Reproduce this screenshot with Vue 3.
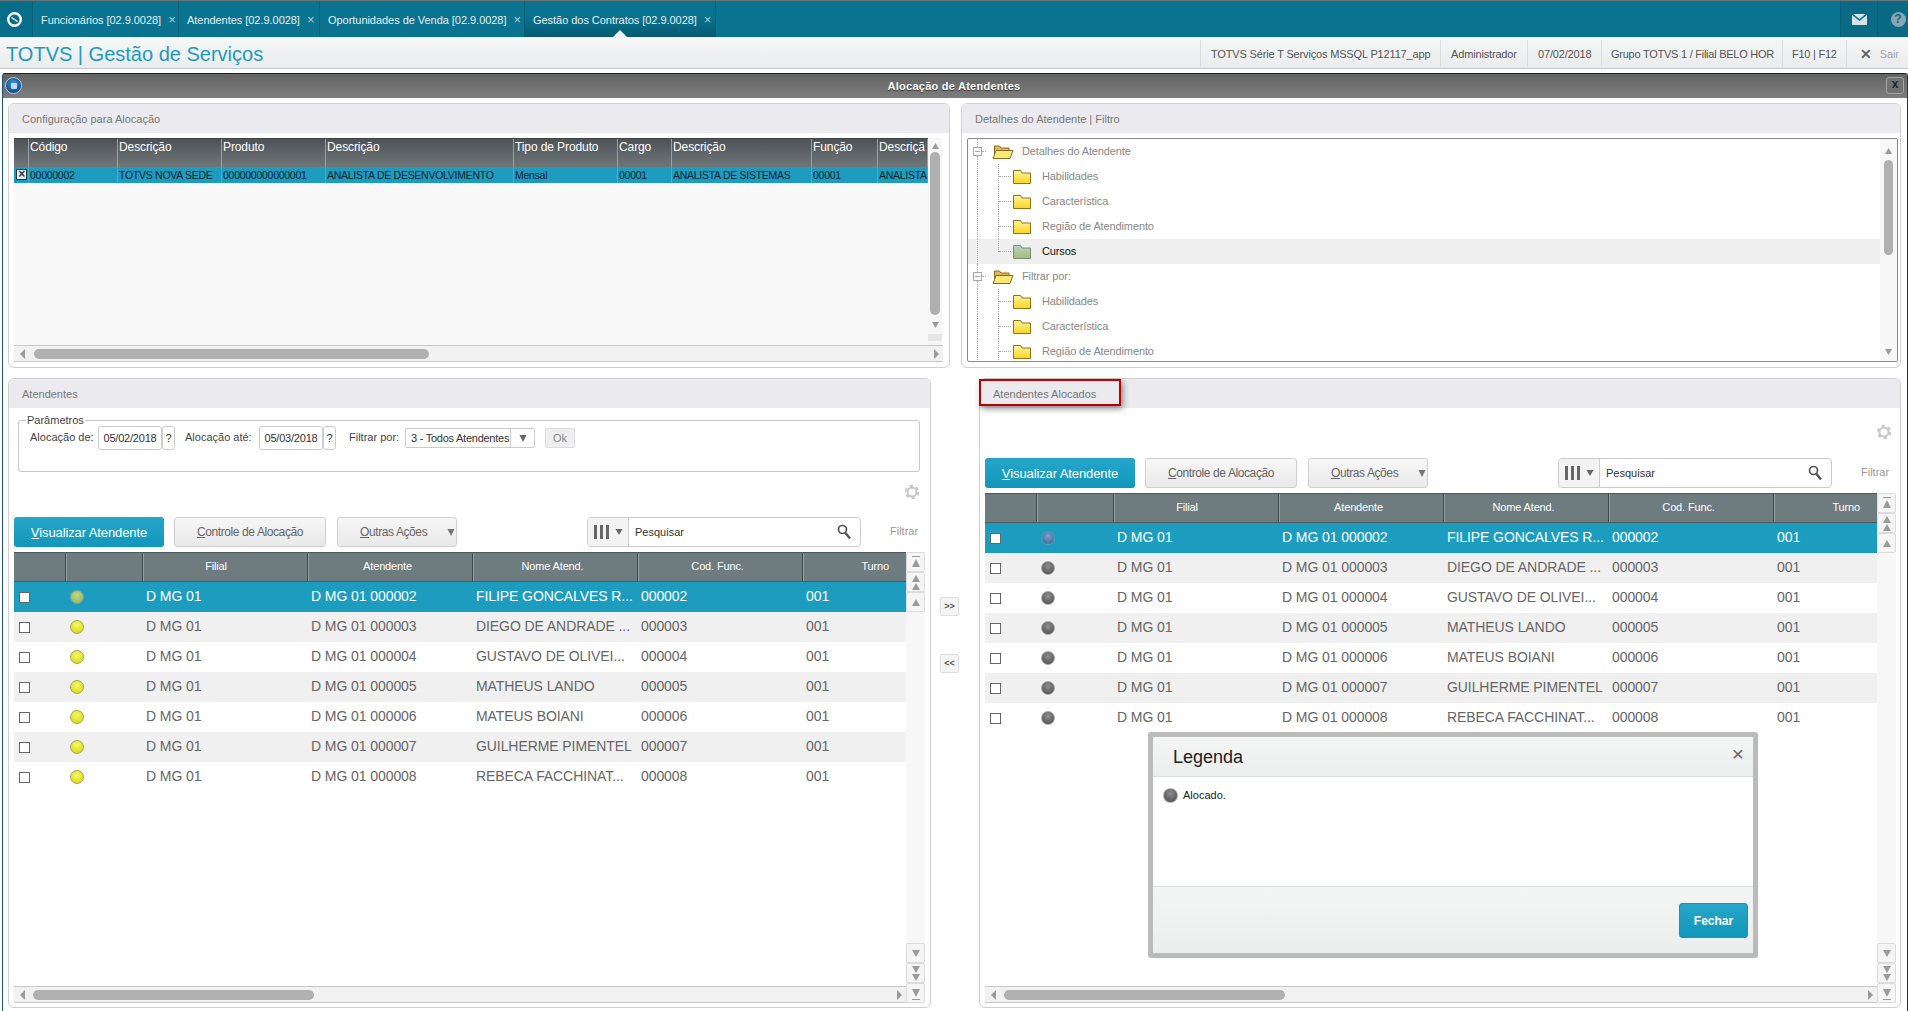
<script setup>
const tabs = [
  { name: 'Funcionários [02.9.0028]', w: 146 },
  { name: 'Atendentes [02.9.0028]', w: 141 },
  { name: 'Oportunidades de Venda [02.9.0028]', w: 205 },
  { name: 'Gestão dos Contratos [02.9.0028]', w: 191, active: true }
]
const infos = [
  { t: 'TOTVS Série T Serviços MSSQL P12117_app', w: 240 },
  { t: 'Administrador', w: 87 },
  { t: '07/02/2018', w: 74 },
  { t: 'Grupo TOTVS 1 / Filial BELO HOR', w: 181, tight: true },
  { t: 'F10 | F12', w: 64, tight: true }
]
const topCols = [
  { t: '', w: 15 }, { t: 'Código', v: '00000002', w: 89 }, { t: 'Descrição', v: 'TOTVS NOVA SEDE', w: 104 },
  { t: 'Produto', v: '000000000000001', w: 104 }, { t: 'Descrição', v: 'ANALISTA DE DESENVOLVIMENTO', w: 188 },
  { t: 'Tipo de Produto', v: 'Mensal', w: 104 }, { t: 'Cargo', v: '00001', w: 54 },
  { t: 'Descrição', v: 'ANALISTA DE SISTEMAS', w: 140 }, { t: 'Função', v: '00001', w: 66 },
  { t: 'Descriçã', v: 'ANALISTA', w: 50 }
]
const tree = [
  { t: 'Detalhes do Atendente', root: true },
  { t: 'Habilidades' }, { t: 'Característica' }, { t: 'Região de Atendimento' },
  { t: 'Cursos', sel: true, last: true },
  { t: 'Filtrar por:', root: true },
  { t: 'Habilidades' }, { t: 'Característica' }, { t: 'Região de Atendimento' }
]
const heads = ['Filial', 'Atendente', 'Nome Atend.', 'Cod. Func.', 'Turno']
const people = [
  ['000002', 'FILIPE GONCALVES R...'], ['000003', 'DIEGO DE ANDRADE ...'], ['000004', 'GUSTAVO DE OLIVEI...'],
  ['000005', 'MATHEUS LANDO'], ['000006', 'MATEUS BOIANI'], ['000007', 'GUILHERME PIMENTEL'], ['000008', 'REBECA FACCHINAT...']
]
const panels = [
  { title: 'Atendentes', led: 'yellow', params: true },
  { title: 'Atendentes Alocados', led: 'grey', params: false }
]
</script>

<template>
  <div class="page">
    <div class="topbar">
      <div class="logo-cell">
        <svg width="17" height="17" viewBox="0 0 17 17"><circle cx="8.5" cy="8.5" r="6.3" fill="none" stroke="#fff" stroke-width="2.4"/><path d="M5.5 6.5 11.500 10.500" stroke="#fff" stroke-width="1.400"/></svg>
      </div>
      <div v-for="tab in tabs" :key="tab.name" class="tab" :class="{ active: tab.active }" :style="{ width: tab.w + 'px' }">
        <span class="tab-name">{{ tab.name }}</span><span class="tab-x">×</span>
        <i v-if="tab.active" class="tab-arrow"></i>
      </div>
      <div class="top-spacer"></div>
      <div class="top-icon">
        <svg width="15" height="11" viewBox="0 0 15 11"><path d="M0 0h15v11H0z" fill="#d5e3ea"/><path d="M0 0 7.5 6 15 0" fill="none" stroke="#0a7390" stroke-width="1.6"/></svg>
      </div>
      <div class="top-icon help"><span>?</span></div>
    </div>

    <header class="appbar">
      <div class="app-title">TOTVS | Gestão de Serviços</div>
      <div class="info-list">
        <span v-for="i in infos" :key="i.t" class="info" :class="{ tight: i.tight }" :style="{ width: i.w + 'px' }">{{ i.t }}</span>
        <span class="info exit"><b>✕</b><em>Sair</em></span>
      </div>
    </header>

    <section class="window">
      <div class="titlebar">
        <span class="win-icon"><i></i></span>
        <span class="win-title">Alocação de Atendentes</span>
        <span class="win-close">x</span>
      </div>
      <div class="content">
        <div class="row-one">
          <div class="panel config">
            <div class="panel-head">Configuração para Alocação</div>
            <div class="config-body">
              <div class="config-main">
                <div class="old-table">
                  <div class="old-head">
                    <div v-for="(c, n) in topCols" :key="n" class="old-cell" :style="{ width: c.w + 'px' }">{{ c.t }}</div>
                  </div>
                  <div class="old-row">
                    <div v-for="(c, n) in topCols" :key="n" class="old-cell" :style="{ width: c.w + 'px' }">
                      <span v-if="n === 0" class="old-check">×</span>{{ c.v }}
                    </div>
                  </div>
                </div>
                <div class="slim-v">
                  <svg class="tri" width="9" height="8" viewBox="0 0 9 8"><path d="M4.5 1 8 7H1z"/></svg>
                  <div class="slim-thumb"></div>
                  <svg class="tri" width="9" height="8" viewBox="0 0 9 8"><path d="M4.5 7 8 1H1z"/></svg>
                  <div class="slim-end"></div>
                </div>
              </div>
              <div class="hscroll">
                <svg class="tri" width="7" height="12" viewBox="0 0 7 12"><path d="M1 6 6 1v10z"/></svg>
                <div class="h-track"><div class="h-thumb config-thumb"></div></div>
                <svg class="tri" width="7" height="12" viewBox="0 0 7 12"><path d="M6 6 1 1v10z"/></svg>
              </div>
            </div>
          </div>

          <div class="panel details">
            <div class="panel-head">Detalhes do Atendente | Filtro</div>
            <div class="tree-box">
              <div class="tree-list">
                <div v-for="(n, idx) in tree" :key="idx" class="tree-row" :class="{ sel: n.sel, root: n.root }">
                  <template v-if="n.root">
                    <span class="exp"><i class="dot-v"></i><i class="exp-box"></i><i class="dot-v"></i></span>
                    <i class="dot-h short"></i>
                    <svg width="22" height="17" viewBox="0 0 22 17" class="folder-open">
                      <path d="M2.5 15V3h5l1.500 2H17v3" fill="#e2b64e" stroke="#8a6a22"/>
                      <path d="M1 15.500 4 7.500H21L18 15.500Z" fill="#fde877" stroke="#8a6a22"/>
                    </svg>
                    <span class="tree-text">{{ n.t }}</span>
                  </template>
                  <template v-else>
                    <i class="guide one"></i>
                    <i class="guide two" :class="{ half: n.last }"></i>
                    <i class="dot-h"></i>
                    <svg width="20" height="16" viewBox="0 0 20 16" class="folder">
                      <defs>
                        <linearGradient id="fy" x1="0" y1="0" x2="0" y2="1"><stop offset="0" stop-color="#fff3a0"/><stop offset="1" stop-color="#fbd51f"/></linearGradient>
                        <linearGradient id="fg" x1="0" y1="0" x2="0" y2="1"><stop offset="0" stop-color="#b4d2c8"/><stop offset="1" stop-color="#a6bd78"/></linearGradient>
                      </defs>
                      <path d="M1.500 14.500V1.500h7l1.500 2.500h8.500v10.500Z" :fill="n.sel ? 'url(#fg)' : 'url(#fy)'" :stroke="n.sel ? '#7f8f6c' : '#94701c'"/>
                    </svg>
                    <span class="tree-text">{{ n.t }}</span>
                  </template>
                </div>
              </div>
              <div class="tree-scroll">
                <svg class="tri" width="9" height="8" viewBox="0 0 9 8"><path d="M4.5 1 8 7H1z"/></svg>
                <div class="tree-thumb"></div>
                <svg class="tri tree-down" width="9" height="8" viewBox="0 0 9 8"><path d="M4.5 7 8 1H1z"/></svg>
              </div>
            </div>
          </div>
        </div>

        <div class="row-two">
          <template v-for="(p, pi) in panels" :key="p.title">
            <div class="panel lower" :class="pi === 0 ? 'lower-left' : 'lower-right'">
              <div class="panel-head">
                {{ p.title }}
                <i v-if="!p.params" class="red-mark"></i>
              </div>
              <div class="lower-body">
                <fieldset v-if="p.params" class="params">
                  <legend>Parâmetros</legend>
                  <label>Alocação de:</label>
                  <span class="date">05/02/2018</span><span class="ask">?</span>
                  <label class="l2">Alocação até:</label>
                  <span class="date">05/03/2018</span><span class="ask">?</span>
                  <label class="l3">Filtrar por:</label>
                  <span class="select"><span class="select-text">3 - Todos Atendentes</span><span class="select-btn"><svg class="tri" width="8" height="9" viewBox="0 0 8 9"><path d="M4 8 .5 1h7z"/></svg></span></span>
                  <span class="ok">Ok</span>
                </fieldset>
                <div class="gear-row" :class="{ compact: !p.params }">
                  <svg width="14" height="18" viewBox="0 0 14 18"><circle cx="7" cy="9" r="4.500" fill="none" stroke="#c8c8c8" stroke-width="2"/><circle cx="7" cy="9" r="6" fill="none" stroke="#c8c8c8" stroke-width="2.400" stroke-dasharray="3.200 3.100"/></svg>
                </div>
                <div class="toolbar">
                  <button class="btn primary"><u>V</u>isualizar Atendente</button>
                  <button class="btn control"><u>C</u>ontrole de Alocação</button>
                  <button class="btn other"><span><u>O</u>utras Ações</span><svg class="tri" width="8" height="9" viewBox="0 0 8 9"><path d="M4 8 .5 1h7z"/></svg></button>
                  <div class="search">
                    <span class="cols"><i></i><i></i><i></i><svg class="tri" width="8" height="6" viewBox="0 0 8 6"><path d="M4 6 .5 0h7z"/></svg></span>
                    <span class="search-text">Pesquisar</span>
                    <svg width="14" height="16" viewBox="0 0 14 16"><circle cx="5.500" cy="5.500" r="4" fill="none" stroke="#555" stroke-width="1.700"/><path d="M8.500 9 13 14.500" stroke="#555" stroke-width="2.400"/></svg>
                  </div>
                  <span class="filter">Filtrar</span>
                </div>
                <div class="grid-wrap">
                  <div class="grid-main">
                    <div class="grid">
                      <div class="g-row g-head">
                        <div class="g-check"></div><div class="g-led"></div>
                        <div v-for="(h, hi) in heads" :key="h" class="g-col" :class="'h' + hi">{{ h }}</div>
                      </div>
                      <div v-for="(r, ri) in people" :key="r[0]" class="g-row g-data" :class="{ selected: ri === 0, alt: ri % 2 === 1 }">
                        <div class="g-check"><i></i></div>
                        <div class="g-led"><i :class="p.led"></i></div>
                        <div class="g-col">D MG 01</div>
                        <div class="g-col">D MG 01 {{ r[0] }}</div>
                        <div class="g-col">{{ r[1] }}</div>
                        <div class="g-col">{{ r[0] }}</div>
                        <div class="g-col">001</div>
                      </div>
                    </div>
                    <div class="hscroll lower-h">
                      <svg class="tri" width="7" height="12" viewBox="0 0 7 12"><path d="M1 6 6 1v10z"/></svg>
                      <div class="h-track"><div class="h-thumb lower-thumb"></div></div>
                      <svg class="tri" width="7" height="12" viewBox="0 0 7 12"><path d="M6 6 1 1v10z"/></svg>
                    </div>
                  </div>
                  <div class="v-buttons">
                    <div class="v-group">
                      <span class="v-btn"><svg class="tri" width="10" height="15" viewBox="0 0 10 15"><path d="M1 1h8v1H1zM5 4 9 12H1z"/></svg></span>
                      <span class="v-btn"><svg class="tri" width="10" height="15" viewBox="0 0 10 15"><path d="M5 0 9 7H1zM5 8 9 15H1z"/></svg></span>
                      <span class="v-btn"><svg class="tri" width="10" height="9" viewBox="0 0 10 9"><path d="M5 1 9 8H1z"/></svg></span>
                    </div>
                    <div class="v-group">
                      <span class="v-btn"><svg class="tri" width="10" height="9" viewBox="0 0 10 9"><path d="M5 8 9 1H1z"/></svg></span>
                      <span class="v-btn"><svg class="tri" width="10" height="15" viewBox="0 0 10 15"><path d="M5 7 9 0H1zM5 15 9 8H1z"/></svg></span>
                      <span class="v-btn"><svg class="tri" width="10" height="15" viewBox="0 0 10 15"><path d="M5 11 9 3H1zM1 13h8v1H1z"/></svg></span>
                    </div>
                  </div>
                </div>
              </div>
            </div>
            <div v-if="pi === 0" class="transfer">
              <span class="move first">&gt;&gt;</span>
              <span class="move">&lt;&lt;</span>
            </div>
          </template>
        </div>
      </div>
    </section>

    <div class="modal">
      <div class="modal-head"><span>Legenda</span><b>×</b></div>
      <div class="modal-body"><i class="led-big"></i><span>Alocado.</span></div>
      <div class="modal-foot"><button class="close-btn">Fechar</button></div>
    </div>
  </div>
</template>

<style>
html, body { margin: 0; background: #fff; }
</style>

<style scoped>
.page { position: relative; width: 1908px; height: 1011px; overflow: hidden; background: #fff; font-family: "Liberation Sans", Arial, sans-serif; color: #666; }
i, em { font-style: normal; }

.topbar { height: 36px; display: flex; background: #0a7390; border-top: 1px solid #6b7479; box-sizing: content-box; }
.logo-cell { width: 33px; box-sizing: border-box; padding-right: 4px; display: flex; align-items: center; justify-content: center; border-right: 1px solid #0a5f78; background: #086d88; }
.tab { position: relative; box-sizing: border-box; display: flex; align-items: center; padding: 1px 0 0 8px; border-right: 1px solid #0a5f78; color: #e4eff3; font-size: 11px; letter-spacing: -0.04px; white-space: nowrap; }
.tab.active { background: linear-gradient(#0a7390, #0a7390 40%, #055a72); }
.tab-x { margin-left: 7px; color: #a9cdd8; font-size: 13px; }
.tab-arrow { position: absolute; left: 50%; bottom: 0; margin-left: -7px; border: 7px solid transparent; border-top: 0; border-bottom-color: #eef1f2; }
.top-spacer { flex: 1; }
.top-icon { width: 36px; display: flex; align-items: center; justify-content: center; background: #0a6a85; border-left: 1px solid #0a5f78; }
.top-icon.help { width: 31px; box-sizing: border-box; padding-left: 10px; }
.top-icon.help span { width: 15px; height: 15px; border-radius: 50%; background: #8ba4b0; color: #0a6a85; font-size: 12px; font-weight: bold; line-height: 15px; text-align: center; }

.appbar { height: 32px; box-sizing: border-box; display: flex; justify-content: space-between; align-items: center; background: linear-gradient(#f6f8f8, #e9ebec); border-bottom: 1px solid #c6c8c9; padding-left: 6px; }
.app-title { font-size: 20px; color: #1d9ac0; white-space: nowrap; padding-top: 4px; }
.info-list { display: flex; align-self: stretch; padding: 3px 0 1px; }
.info { display: flex; align-items: center; box-sizing: border-box; padding: 1px 0 0 10px; border-left: 1px solid #dadcdd; font-size: 11px; letter-spacing: -0.16px; color: #555; white-space: nowrap; }
.info.tight { letter-spacing: -0.25px; padding-left: 9px; }
.exit { width: 62px; padding-left: 13px; gap: 8px; }
.exit b { font-size: 14px; color: #666; }
.exit em { color: #a3a3ab; }

.window { margin: 4px 0 0 2px; height: 937px; border-top: 1px solid #222; border-left: 1px solid #1d4f80; border-right: 1px solid #333; border-radius: 3px 3px 0 0; }
.titlebar { position: relative; height: 24px; display: flex; align-items: center; justify-content: center; background: linear-gradient(#636363, #7d7d7d); padding-right: 2px; }
.win-title { color: #fff; font-size: 11px; font-weight: bold; letter-spacing: 0.25px; text-shadow: 0 1px 1px #333; }
.win-icon { position: absolute; left: 2px; top: 3px; width: 17px; height: 17px; border-radius: 50%; background: radial-gradient(circle at 50% 40%, #48a0e0, #0d4d92 70%); border: 1px solid #c6ccd2; box-sizing: border-box; display: flex; align-items: center; justify-content: center; }
.win-icon i { width: 6px; height: 6px; background: #bcd9f0; border-radius: 1px; }
.win-close { position: absolute; right: 3px; top: 3px; width: 18px; height: 17px; box-sizing: border-box; border: 1px solid #a5a5a5; border-radius: 3px; background: #717171; color: #1c2530; font-size: 12px; font-weight: bold; text-align: center; line-height: 13px; }

.content { padding: 5px 0 0 5px; }
.row-one { display: flex; gap: 11px; height: 265px; }
.row-two { display: flex; height: 630px; margin-top: 10px; }
.panel { box-sizing: border-box; border: 1px solid #cfcfcf; border-radius: 6px; background: #fff; display: flex; flex-direction: column; }
.panel-head { position: relative; height: 29px; flex: none; display: flex; align-items: center; padding-left: 13px; background: #ebebef; border-radius: 6px 6px 0 0; font-size: 11px; color: #777; }
.config { width: 942px; }
.details { width: 940px; }
.config-body { padding: 5px 0 0 5px; }
.config-main { display: flex; height: 207px; }
.old-table { width: 914px; background: #f8f8f8; }
.old-head { height: 29px; display: flex; background: linear-gradient(#4d5356, #6f7678); border-top: 1px solid #3f4446; box-sizing: border-box; }
.old-head .old-cell { color: #fff; padding-top: 1px; font-size: 12px; letter-spacing: -0.1px; border-right: 1px solid #9aa0a2; }
.old-row { height: 16px; display: flex; background: #1d9cc0; }
.old-row .old-cell { color: #10232a; line-height: 16px; font-size: 10.5px; letter-spacing: -0.27px; border-right: 1px solid #4ea9c4; }
.old-cell { box-sizing: border-box; padding-left: 1px; white-space: nowrap; overflow: hidden; flex: none; }
.old-check { display: block; width: 11px; height: 11px; margin: 2px 0 0 1px; box-sizing: border-box; border: 1px solid #234; background: #e8eef0; line-height: 9px; text-align: center; font-size: 12px; font-weight: bold; color: #234; }
.slim-v { width: 14px; background: #f6f6f6; display: flex; flex-direction: column; align-items: center; padding-top: 4px; box-sizing: border-box; }
.slim-thumb { width: 10px; height: 163px; margin: 2px 0 6px; background: #b0b0b0; border-radius: 5px; }
.slim-end { margin-top: 5px; width: 14px; height: 7px; background: #e6e6e6; }
.tri { fill: #9a9a9a; flex: none; }
.hscroll { width: 929px; height: 17px; box-sizing: border-box; display: flex; align-items: center; padding: 0 3px 0 5px; gap: 5px; background: #f1f1f1; border-top: 1px solid #c8c8c8; border-bottom: 1px solid #c8c8c8; }
.h-track { flex: 1; }
.h-thumb { height: 10px; background: #b0b0b0; border-radius: 5px; }
.config-thumb { width: 395px; margin-left: 3px; }
.lower-h { width: 892px; }
.lower-thumb { width: 281px; margin-left: 2px; }

.tree-box { margin: 5px 0 0 5px; width: 931px; height: 224px; box-sizing: border-box; border: 1px solid #8a8a8a; border-radius: 2px; display: flex; overflow: hidden; }
.tree-list { flex: 1; }
.tree-row { height: 25px; display: flex; align-items: center; font-size: 11px; letter-spacing: -0.12px; color: #888; white-space: nowrap; }
.tree-row.sel { background: #efefef; color: #111; }
.tree-row.root { padding-left: 5px; }
.tree-text { padding-bottom: 2px; }
.exp { width: 9px; align-self: stretch; display: flex; flex-direction: column; align-items: center; }
.exp-box { flex: none; width: 9px; height: 9px; box-sizing: border-box; border: 1px solid #aaa; background: linear-gradient(#aaa, #aaa) center / 5px 1px no-repeat #fff; }
.dot-v { flex: 1; border-left: 1px dotted #aaa; }
.dot-h { flex: none; width: 12px; border-top: 1px dotted #aaa; }
.dot-h.short { width: 4px; margin-right: 6px; }
.folder-open { margin-right: 8px; flex: none; }
.guide { flex: none; align-self: stretch; border-left: 1px dotted #aaa; }
.guide.one { margin-left: 9px; }
.guide.two { margin-left: 20px; }
.guide.half { align-self: flex-start; height: 13px; }
.folder { margin: 0 10px 0 1px; flex: none; }
.tree-scroll { width: 17px; background: #f7f7f7; display: flex; flex-direction: column; align-items: center; padding-top: 8px; box-sizing: border-box; }
.tree-thumb { width: 9px; height: 95px; margin-top: 5px; background: #b0b0b0; border-radius: 5px; }
.tree-down { margin-top: auto; margin-bottom: 5px; }

.lower { flex: none; }
.lower-left { width: 923px; }
.lower-right { width: 922px; }
.red-mark { position: absolute; left: -1px; top: 0; width: 142px; height: 27px; box-sizing: border-box; border: 2px solid #c00000; box-shadow: 2px 3px 6px rgba(0, 0, 0, .4); }
.transfer { width: 48px; flex: none; display: flex; flex-direction: column; align-items: flex-start; padding: 219px 0 0 9px; box-sizing: border-box; gap: 38px; }
.move { width: 19px; height: 19px; box-sizing: border-box; border: 1px solid #ddd; border-radius: 2px; background: #f4f4f4; font-size: 9px; color: #555; font-weight: bold; text-align: center; line-height: 16px; }
.lower-body { flex: 1; display: flex; flex-direction: column; padding: 0 0 4px 5px; min-height: 0; }
.params { margin: 7px 10px 0 4px; height: 57px; box-sizing: border-box; border: 1px solid #c8c8c8; border-radius: 3px; display: flex; align-items: flex-start; padding: 0 0 0 8px; font-size: 11px; color: #444; min-width: 0; flex: none; }
.params legend { margin-left: -1px; padding: 0 1px; font-size: 11px; color: #444; line-height: 11px; }
.params label { margin: 5px 5px 0 3px; width: 63px; white-space: nowrap; }
.params .l2 { margin-left: 10px; width: 69px; }
.params .l3 { margin-left: 13px; margin-right: 6px; width: 50px; }
.date { width: 64px; height: 24px; box-sizing: border-box; border: 1px solid #ccc; border-radius: 3px; line-height: 23px; text-align: center; letter-spacing: -0.2px; color: #333; white-space: nowrap; }
.ask { width: 13px; height: 24px; box-sizing: border-box; border: 1px solid #ccc; border-radius: 3px; line-height: 23px; text-align: center; color: #333; }
.select { width: 130px; height: 20px; margin-top: 2px; box-sizing: border-box; border: 1px solid #ccc; display: flex; line-height: 18px; color: #333; border-radius: 2px; }
.select-text { width: 105px; padding-left: 5px; box-sizing: border-box; white-space: nowrap; letter-spacing: -0.25px; border-right: 1px solid #ccc; }
.select-btn { flex: 1; display: flex; align-items: center; justify-content: center; }
.select-btn .tri { fill: #666; }
.ok { width: 30px; height: 20px; margin: 2px 0 0 10px; box-sizing: border-box; border: 1px solid #ddd; border-radius: 2px; background: #eeeeee; text-align: center; line-height: 18px; color: #888; }
.gear-row { height: 45px; flex: none; display: flex; justify-content: flex-end; align-items: flex-start; padding: 11px 11px 0 0; box-sizing: border-box; }
.gear-row.compact { height: 50px; padding: 15px 9px 0 0; }
.toolbar { flex: none; display: flex; height: 30px; align-items: stretch; }
.btn { box-sizing: border-box; font-family: inherit; border: 1px solid #d0d0d0; border-radius: 3px; background: linear-gradient(#f7f7f7, #e9e9e9); color: #666; font-size: 12px; letter-spacing: -0.4px; padding: 0; white-space: nowrap; }
.btn.primary { width: 150px; border: 0; color: #fff; font-size: 13px; letter-spacing: -0.1px; background: linear-gradient(#28a6c9, #0f97bb); margin-right: 10px; }
.btn.control { width: 152px; margin-right: 11px; }
.btn.other { width: 120px; display: flex; align-items: center; padding-left: 22px; gap: 20px; }
.btn.other .tri { fill: #777; }
.search { width: 274px; margin-left: 130px; box-sizing: border-box; border: 1px solid #ccc; border-radius: 4px; display: flex; align-items: center; padding-right: 9px; }
.cols { width: 41px; align-self: stretch; display: flex; align-items: center; gap: 3px; padding-left: 6px; box-sizing: border-box; background: #f3f3f3; border-right: 1px solid #ccc; border-radius: 4px 0 0 4px; }
.cols i { width: 3px; height: 14px; background: #666; }
.cols .tri { margin-left: 3px; fill: #666; }
.search-text { flex: 1; padding-left: 6px; font-size: 11px; color: #333; }
.filter { margin-left: 29px; font-size: 11px; color: #999; line-height: 28px; }

.grid-wrap { flex: 1; min-height: 0; display: flex; margin-top: 5px; }
.grid-main { width: 892px; display: flex; flex-direction: column; }
.grid { flex: 1; }
.g-row { display: grid; grid-template-columns: 52px 77px 165px 165px 165px 165px 103px; }
.g-head { height: 28px; background: #6e7b7f; border-top: 1px solid #4e595d; border-bottom: 1px solid #4e595d; color: #fff; font-size: 11px; letter-spacing: -0.15px; line-height: 27px; text-align: center; }
.g-head > div { border-right: 1px solid #3f4a4d; box-shadow: 1px 0 0 #93a0a3; }
.g-head > div:last-child { border: 0; box-shadow: none; text-align: right; padding-right: 17px; }
.g-head .g-col { padding: 0 5px 0 0; }
.g-head .h0 { padding-right: 18px; }
.g-data { height: 30px; font-size: 14px; letter-spacing: -0.08px; line-height: 29px; color: #666; white-space: nowrap; }
.g-data .g-col { padding-left: 3px; overflow: hidden; }
.g-data.alt { background: #f0f0f0; }
.g-data.selected { background: #1c9dc0; color: #fff; }
.g-check, .g-led { display: flex; align-items: center; }
.g-check { padding-left: 5px; }
.g-check i { width: 11px; height: 11px; box-sizing: border-box; border: 1px solid #666; background: #fff; margin-top: 1px; }
.g-led { padding-left: 4px; }
.g-led i { width: 14px; height: 14px; border-radius: 50%; box-sizing: border-box; }
.g-led .yellow { background: radial-gradient(circle at 50% 35%, #f8f868, #dcdc1e 75%); border: 1px solid #a7a755; }
.g-led .grey { background: radial-gradient(circle at 50% 35%, #8e8e8e, #555 80%); border: 1px solid #aaa; }
.selected .g-led .yellow { background: radial-gradient(circle at 50% 35%, #c3d689, #98bc62 75%); border-color: #7ea590; }
.selected .g-led .grey { background: radial-gradient(circle at 50% 35%, #7aa0c8, #42709f 80%); border-color: #5d96b8; }
.v-buttons { width: 19px; display: flex; flex-direction: column; justify-content: space-between; background: #f7f7f7; }
.v-group { display: flex; flex-direction: column; }
.v-btn { height: 20px; box-sizing: border-box; border: 1px solid #dcdcdc; border-radius: 2px; background: #f5f5f5; display: flex; align-items: center; justify-content: center; }

.modal { position: absolute; left: 1148px; top: 732px; width: 610px; height: 226px; box-sizing: border-box; border: 5px solid #bbb; border-radius: 3px; background: #fff; display: flex; flex-direction: column; }
.modal-head { height: 40px; box-sizing: border-box; flex: none; display: flex; justify-content: space-between; padding: 10px 9px 0 20px; background: linear-gradient(#f4f5f5, #eceded); border-bottom: 1px solid #dcdcdc; font-size: 18px; color: #222; }
.modal-head b { font-size: 21px; font-weight: normal; color: #666; line-height: 14px; }
.modal-body { flex: 1; display: flex; align-items: flex-start; gap: 5px; padding: 11px 0 0 10px; font-size: 11px; color: #222; line-height: 15px; }
.led-big { width: 15px; height: 15px; border-radius: 50%; box-sizing: border-box; background: radial-gradient(circle at 50% 35%, #8e8e8e, #555 80%); border: 1px solid #aaa; }
.modal-foot { height: 67px; box-sizing: border-box; flex: none; display: flex; justify-content: flex-end; align-items: flex-start; padding: 16px 5px 0 0; background: linear-gradient(#f4f5f5, #eceded); border-top: 1px solid #dcdcdc; }
.close-btn { width: 69px; height: 35px; border: 1px solid #1a93b4; border-radius: 3px; background: linear-gradient(#28a6c9, #0f97bb); color: #fff; font-family: inherit; font-size: 12px; font-weight: bold; padding: 0; }
</style>
